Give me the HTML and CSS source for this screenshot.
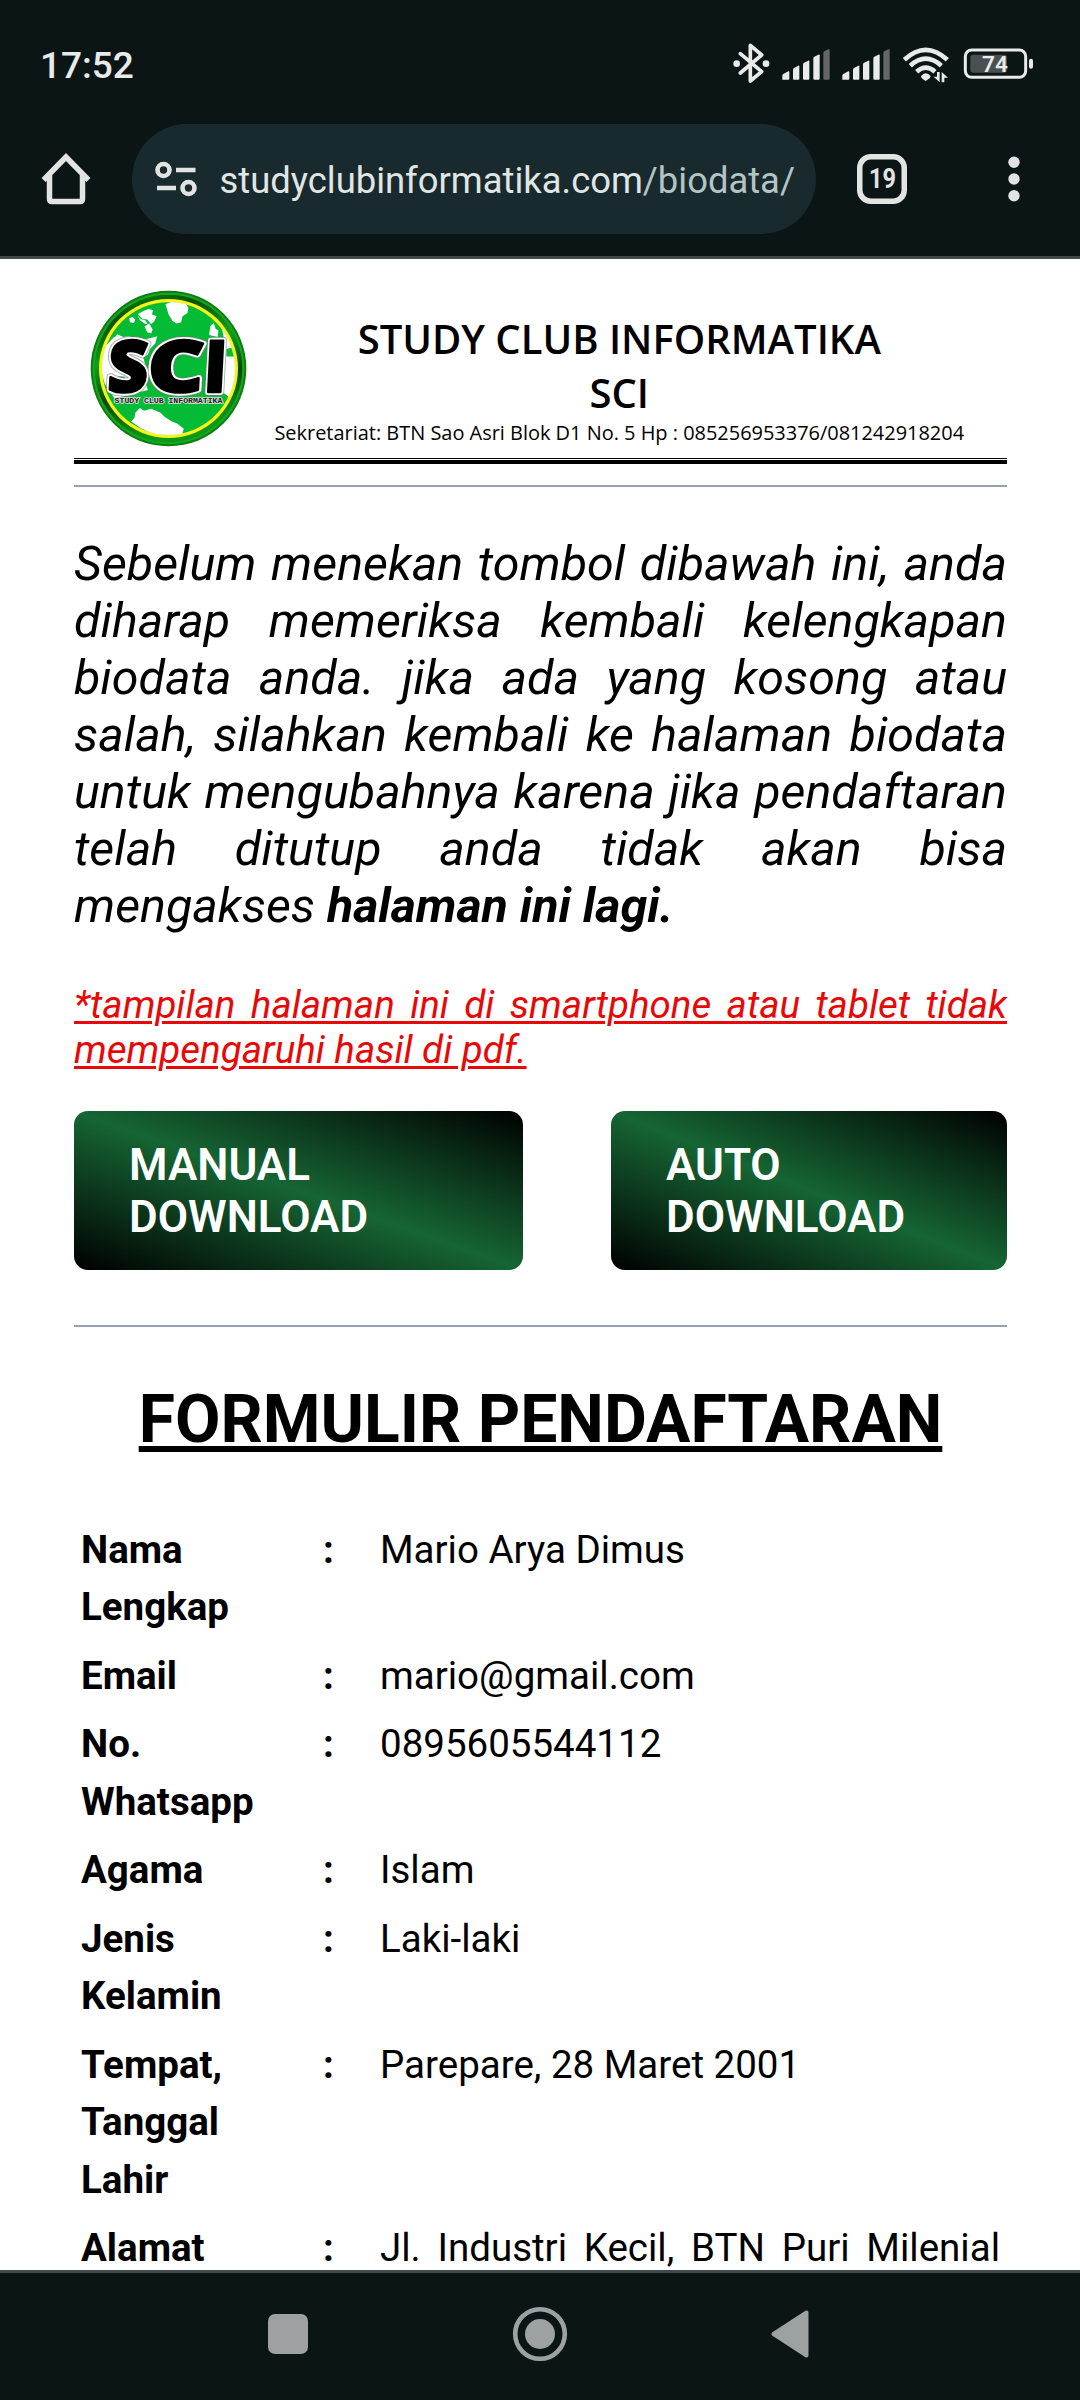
FILE: index.html
```html
<!DOCTYPE html>
<html lang="id">
<head>
<meta charset="utf-8">
<title>Formulir Pendaftaran</title>
<link rel="stylesheet" href="styles.css">
</head>
<body>
<div class="screen">
  <div class="chrome">
    <div class="status">
      <span class="clock">17:52</span>
      <div class="status-icons">
        <svg width="37.33" height="40" viewBox="38 40 112 120">
          <path d="M60 72 L124 126 L90 154 V47 L124 76 L60 130" fill="none" stroke="#e8ebea" stroke-width="11" stroke-linejoin="round" stroke-linecap="round"/>
          <circle cx="49" cy="102" r="10" fill="#e8ebea"/><circle cx="137" cy="102" r="10" fill="#e8ebea"/>
        </svg>
        <svg width="48" height="40" viewBox="186 40 144 120">
          <g fill="#e8ebea"><path d="M187 150v-12q0-3 3-5l15-8q3-1 3 2v20q0 3-3 3z"/><path d="M219 147v-27q0-3 3-5l13-7q3-1 3 2v37q0 3-3 3h-13q-3 0-3-3z"/><path d="M249 147v-42q0-4 3-6l13-6q3-1 3 2v52q0 3-3 3h-13q-3 0-3-3z"/><path d="M280 147v-60q0-4 3-6l12-6q4-1 4 2v70q0 3-3 3h-13q-3 0-3-3z"/></g>
          <path d="M310 147v-76q0-4 3-6l12-6q4-1 4 2v86q0 3-3 3h-13q-3 0-3-3z" fill="#626767"/>
        </svg>
        <svg width="48" height="40" viewBox="186 40 144 120">
          <g fill="#e8ebea"><path d="M187 150v-12q0-3 3-5l15-8q3-1 3 2v20q0 3-3 3z"/><path d="M219 147v-27q0-3 3-5l13-7q3-1 3 2v37q0 3-3 3h-13q-3 0-3-3z"/><path d="M249 147v-42q0-4 3-6l13-6q3-1 3 2v52q0 3-3 3h-13q-3 0-3-3z"/><path d="M280 147v-60q0-4 3-6l12-6q4-1 4 2v70q0 3-3 3h-13q-3 0-3-3z"/></g>
          <path d="M310 147v-76q0-4 3-6l12-6q4-1 4 2v86q0 3-3 3h-13q-3 0-3-3z" fill="#626767"/>
        </svg>
        <svg width="48" height="40" viewBox="546 40 144 120">
          <g fill="none" stroke="#e8ebea" stroke-width="14"><path d="M553 90 Q617 31 682 90"/><path d="M571 108 Q617 66 664 108"/><path d="M590 126 Q617 102 645 126"/></g>
          <path d="M603 139 Q617 123 632 139 L629 146 L617 154 L605 146z" fill="#e8ebea"/>
          <path d="M651 127h8v31l-18-17h10zM665 158v-31l19 17h-11v14z" fill="#e8ebea"/>
        </svg>
        <svg width="71.33" height="40" viewBox="726 40 214 120">
          <rect x="736" y="61" width="181" height="82" rx="19" fill="none" stroke="#e8ebea" stroke-width="9"/>
          <rect x="751" y="75" width="110" height="54" rx="8" fill="#4a5051"/>
          <rect x="927" y="87" width="12" height="30" rx="6" fill="#e8ebea"/>
          <text x="786" y="128" font-size="68" font-weight="600" font-family="Roboto, sans-serif" fill="#e8ebea">74</text>
        </svg>
      </div>
    </div>
    <div class="toolbar">
      <svg class="home" width="52" height="52" viewBox="0 0 52 52"><path d="M3.500 27 26 4 48.500 27M9.500 22v24q0 2.500 2.500 2.500h28q2.500 0 2.500-2.500V22" fill="none" stroke="#e1e4e3" stroke-width="5.500"/></svg>
      <div class="omnibox">
        <svg width="42" height="36" viewBox="0 0 42 36"><g fill="none" stroke="#e1e4e3" stroke-width="4.600"><circle cx="8.500" cy="9" r="6"/><circle cx="33.500" cy="27" r="6"/><path d="M21 9h19.500M2 27h19"/></g></svg>
        <span class="url">studyclubinformatika.com<span class="path">/biodata/</span></span>
      </div>
      <svg class="tabs" width="50" height="50" viewBox="0 0 50 50"><rect x="2.750" y="2.750" width="44.500" height="44.500" rx="11" fill="none" stroke="#e1e4e3" stroke-width="5.500"/><text x="12" y="34" font-size="27" font-weight="700" font-family="Roboto, sans-serif" fill="#e1e4e3" textLength="27" lengthAdjust="spacingAndGlyphs">19</text></svg>
      <svg width="14" height="46" viewBox="0 0 14 46"><g fill="#e1e4e3"><circle cx="7" cy="6.300" r="5.700"/><circle cx="7" cy="23" r="5.700"/><circle cx="7" cy="39.700" r="5.700"/></g></svg>
    </div>
  </div>

  <main class="page">
    <header class="letterhead">
      <svg class="logo" width="157" height="157" viewBox="16 19 472 472">
        <defs>
          <linearGradient id="ring" x1="0" y1="0" x2=".25" y2="1">
            <stop offset="0" stop-color="#0a9a14"/><stop offset=".2" stop-color="#045204"/><stop offset=".45" stop-color="#0fa01a"/><stop offset=".7" stop-color="#044a04"/><stop offset="1" stop-color="#0c9a16"/>
          </linearGradient>
          <clipPath id="globe"><circle cx="252" cy="255" r="200"/></clipPath>
        </defs>
        <circle cx="252" cy="255" r="234" fill="#0b7d12"/>
        <circle cx="252" cy="255" r="228" fill="#14a81e"/>
        <circle cx="252" cy="255" r="222" fill="url(#ring)"/>
        <circle cx="252" cy="255" r="209" fill="#f7f51a"/>
        <circle cx="252" cy="255" r="199" fill="#04bb36"/>
        <g fill="#fff" clip-path="url(#globe)">
          <path d="M243 62 252 58 270 52 300 56 312 72 309 88 294 98 290 116 276 120 264 112 252 92z"/>
          <path d="M334 50 372 66 400 92 382 88 358 76z"/>
          <path d="M160 92 176 82 192 76 206 80 202 92 216 98 210 112 200 122 188 108 174 106z"/>
          <path d="M134 104l10-4 8 8-4 10-12-2zM160 96l8 10 14 4 8 12-10-2-14-10z"/>
          <path d="M98 152 116 160 134 158 146 166 60 230 60 200z"/>
          <path d="M186 166 218 158 212 180 196 196 190 214 176 222 184 250 174 270 190 320 90 345 60 300 44 240 60 190 88 160 130 166z"/>
          <path d="M180 128 194 120 204 138 200 150 188 146z"/>
          <path d="M378 128 388 118 394 136 402 140 400 160 374 154zM412 132 440 150 452 190 425 196z"/>
          <path d="M424 218 460 220 462 290 440 345 420 330zM390 190h36v140h-44l-10-30z"/>
          <path d="M152 388 166 374 178 382 200 376 228 388 240 400 262 414 278 420 298 436 290 462 220 460 168 434 140 414 150 402z"/>
        </g>
        <path d="M90 285 104 278 122 280 116 290 96 292z" fill="#04bb36"/>
        <g transform="translate(13 0) skewX(-3)" font-family="'Open Sans', sans-serif" font-weight="800" font-size="216" stroke-linejoin="round">
          <use href="#sci" fill="#777" stroke="#777" stroke-width="24" opacity=".6"/>
          <use href="#sci" fill="#fff" stroke="#fff" stroke-width="18"/>
          <g fill="#000" stroke="#000"><g id="sci"><text x="70" y="327" textLength="122" lengthAdjust="spacingAndGlyphs">S</text><text x="190" y="327" textLength="170" lengthAdjust="spacingAndGlyphs">C</text><text x="360" y="327" textLength="68" lengthAdjust="spacingAndGlyphs">I</text></g></g>
          <use href="#sci" fill="#000" stroke="#000" stroke-width="7"/>
        </g>
        <text x="90" y="359" font-family="'Liberation Mono', monospace" font-weight="700" font-size="21" textLength="324" lengthAdjust="spacingAndGlyphs" fill="#222" stroke="#ddd" stroke-width="5" paint-order="stroke">STUDY CLUB INFORMATIKA</text>
      </svg>
      <div class="org">
        <div class="org-name">STUDY CLUB INFORMATIKA<br>SCI</div>
        <div class="org-address">Sekretariat: BTN Sao Asri Blok D1 No. 5 Hp : 085256953376/081242918204</div>
      </div>
    </header>
    <div class="double-rule"></div>
    <hr class="rule">
    <p class="intro">Sebelum menekan tombol dibawah ini, anda diharap memeriksa kembali kelengkapan biodata anda. jika ada yang kosong atau salah, silahkan kembali ke halaman biodata untuk mengubahnya karena jika pendaftaran telah ditutup anda tidak akan bisa mengakses <b>halaman ini lagi.</b></p>
    <p class="note">*tampilan halaman ini di smartphone atau tablet tidak mempengaruhi hasil di pdf.</p>
    <div class="actions">
      <a class="btn btn-manual">MANUAL<br>DOWNLOAD</a>
      <a class="btn btn-auto">AUTO<br>DOWNLOAD</a>
    </div>
    <hr class="rule">
    <h1 class="title">FORMULIR PENDAFTARAN</h1>
    <table class="bio">
      <tr><th>Nama Lengkap</th><td class="sep">:</td><td>Mario Arya Dimus</td></tr>
      <tr><th>Email</th><td class="sep">:</td><td>mario@gmail.com</td></tr>
      <tr><th>No. Whatsapp</th><td class="sep">:</td><td>0895605544112</td></tr>
      <tr><th>Agama</th><td class="sep">:</td><td>Islam</td></tr>
      <tr><th>Jenis Kelamin</th><td class="sep">:</td><td>Laki-laki</td></tr>
      <tr><th>Tempat, Tanggal Lahir</th><td class="sep">:</td><td>Parepare, 28 Maret 2001</td></tr>
      <tr><th>Alamat</th><td class="sep">:</td><td class="fill">Jl. Industri Kecil, BTN Puri Milenial</td></tr>
    </table>
  </main>

  <nav class="navbar">
    <svg width="40" height="54" viewBox="0 0 40 54"><rect y="7" width="40" height="40" rx="7" fill="#9da1a2"/></svg>
    <svg width="56" height="56" viewBox="0 0 56 56"><circle cx="28" cy="28" r="24.800" fill="none" stroke="#9da1a2" stroke-width="4.600"/><circle cx="28" cy="28" r="15" fill="#9da1a2"/></svg>
    <svg width="38" height="54" viewBox="0 0 38 54"><path d="M35.500 5.500v43L2.500 27z" fill="#9da1a2" stroke="#9da1a2" stroke-width="4" stroke-linejoin="round"/></svg>
  </nav>
</div>
</body>
</html>
```
FILE: styles.css
```css
* { box-sizing: border-box; }
body { margin: 0; background: #fff; color: #000; font-family: Roboto, sans-serif; }
svg { display: block; flex: none; }

.screen { width: 1080px; height: 2400px; display: flex; flex-direction: column; overflow: hidden; }

.chrome { height: 259px; flex: none; background: #0c1516; border-bottom: 3px solid #414a4b; }
.status { height: 124px; padding: 43.33px 46.67px 0 40px; display: flex; justify-content: space-between; align-items: flex-start; }
.clock { font-size: 37px; font-weight: 500; line-height: 45px; color: #e8ebea; }
.status-icons { display: flex; gap: 12px; }

.toolbar { height: 110px; padding: 0 59px 0 40px; display: flex; align-items: center; }
.omnibox { width: 684px; height: 110px; margin: 0 41px 0 40px; padding: 0 0 0 23px; border-radius: 55px; background: #182a2d; display: flex; align-items: center; gap: 22.5px; }
.url { font-size: 36.4px; line-height: 44px; color: #e1e6e5; padding-top: 3px; white-space: nowrap; }
.path { color: #b5c4c4; }
.tabs { margin-right: auto; }

.page { flex: 1; min-height: 0; overflow: hidden; padding: 0 73px 0 74px; display: flex; flex-direction: column; }

.letterhead { height: 199px; flex: none; padding: 31px 15px 0 15.5px; display: flex; align-items: flex-start; }
.org { flex: 1; padding-top: 22px; text-align: center; font-family: "Open Sans", "Noto Sans", sans-serif; white-space: nowrap; }
.org-name { font-size: 40px; font-weight: 600; line-height: 53.6px; }
.org-address { font-size: 19.95px; line-height: 28px; }
.double-rule { height: 6px; flex: none; border-top: 1px solid #000; border-bottom: 4px solid #000; }
.rule { width: 100%; height: 2px; flex: none; border: 0; margin: 21px 0 0; background: #95a2ae; }

.intro { margin: 48px 0 0; font-size: 48.4px; line-height: 57px; font-style: italic; text-align: justify; }
.note { margin: 48px 0 0; font-size: 38.5px; line-height: 45px; font-style: italic; text-align: justify; color: #e80808; text-decoration: underline; text-decoration-thickness: 3px; text-underline-offset: 3px; }

.actions { margin: 39px 0 34px; display: flex; justify-content: space-between; }
.btn { height: 159px; padding: 27.5px 55px; border-radius: 14px; color: #fff; font-size: 44px; font-weight: 600; line-height: 52px; background: linear-gradient(to top right, #000, #166534, #000); }
.btn-manual { width: 449px; }
.btn-auto { width: 396px; }

.title { margin: 53px 0 55px; font-size: 66px; font-weight: 700; line-height: 80px; text-align: center; text-decoration: underline; text-decoration-thickness: 6px; text-underline-offset: 4px; }

.bio { width: 933px; border-collapse: collapse; table-layout: fixed; font-size: 38.5px; line-height: 57.5px; }
.bio th, .bio td { padding: 5.5px 7px; text-align: left; vertical-align: top; }
.bio th { width: 243.5px; padding-right: 40px; font-weight: 700; }
.bio .sep { width: 55.5px; padding: 5.5px; font-weight: 700; }
.bio .fill { text-align-last: justify; }

.navbar { height: 130px; flex: none; padding: 0 271px 5px 268px; display: flex; align-items: center; justify-content: space-between; background: #0c1516; border-top: 3px solid #414a4b; }
```
